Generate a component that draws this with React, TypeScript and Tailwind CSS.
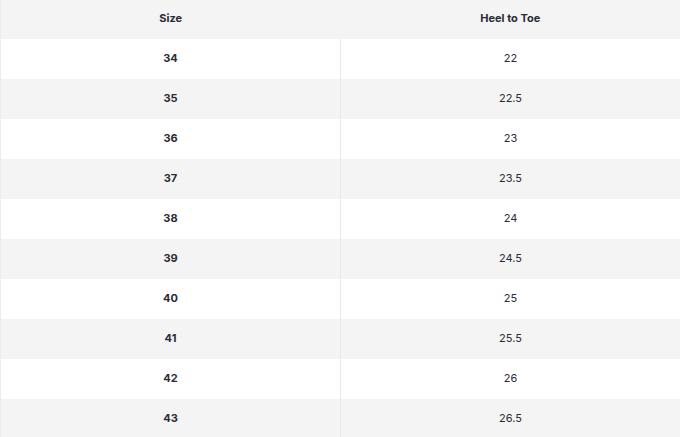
import React from "react";

const rows: [string, string][] = [
  ["34", "22"],
  ["35", "22.5"],
  ["36", "23"],
  ["37", "23.5"],
  ["38", "24"],
  ["39", "24.5"],
  ["40", "25"],
  ["41", "25.5"],
  ["42", "26"],
  ["43", "26.5"],
];

export default function App() {
  return (
    <div className="w-[680px] h-[437px] overflow-hidden bg-white font-['Inter',sans-serif] text-[#2b2b36]">
      <table className="w-full border-collapse border-l border-[#ececec]">
        <thead>
          <tr className="bg-[#f4f4f4] h-[39px]">
            <th className="w-[340px] text-[11px] font-bold text-center pb-[2px]">Size</th>
            <th className="text-[11px] font-bold text-center pb-[2px]">Heel to Toe</th>
          </tr>
        </thead>
        <tbody>
          {rows.map(([size, len], i) => (
            <tr key={size} className={`h-[40px] ${i % 2 === 1 ? "bg-[#f4f4f4]" : "bg-white"}`}>
              <td className="text-[11px] font-bold text-center border-r border-[#e8e8e8] pb-[2px]">{size}</td>
              <td className="text-[11px] text-center pb-[2px]">{len}</td>
            </tr>
          ))}
        </tbody>
      </table>
    </div>
  );
}
